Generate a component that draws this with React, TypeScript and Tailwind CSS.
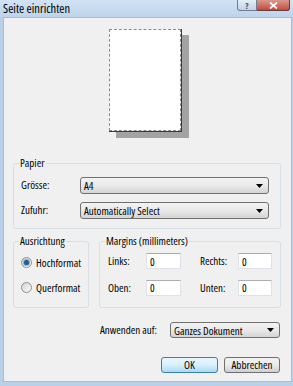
import React from "react";

const font = "font-['Open_Sans','Liberation_Sans',Arial,sans-serif] [font-stretch:condensed] [font-weight:380]";

function Arrow() {
  return (
    <svg width="7" height="4" viewBox="0 0 7 4" className="shrink-0">
      <path d="M0 0H7L3.5 4Z" fill="#000" />
    </svg>
  );
}

function Select({ value, className }: { value: string; className: string }) {
  return (
    <div
      className={`flex items-center justify-between pl-[3px] pr-[5px] rounded-[3px] border border-[#707070] bg-gradient-to-b from-[#f3f3f3] via-[#e9e9e9] to-[#d4d4d4] ${className}`}
    >
      <span className="leading-none">{value}</span>
      <Arrow />
    </div>
  );
}

function Group({ label, className, children }: { label: string; className: string; children: React.ReactNode }) {
  return (
    <div className={`relative border border-[#d5dfe5] rounded-[3px] ${className}`}>
      <span className="absolute -top-[7px] left-[5px] px-[1px] bg-[#f0f0f0] leading-[12px]">{label}</span>
      {children}
    </div>
  );
}

function Field({ value, className }: { value: string; className: string }) {
  return (
    <div
      className={`h-[16px] bg-white border border-[#dde2ea] border-t-[#abadb3] pl-[3px] flex items-center leading-none ${className}`}
    >
      {value}
    </div>
  );
}

function Radio({ checked, label }: { checked?: boolean; label: string }) {
  return (
    <div className="h-[13px] flex items-center gap-[4px] ml-[7px]">
      <div className="w-[11px] h-[11px] rounded-full border border-[#8e8f8f] bg-gradient-to-br from-[#d4d4d4] to-[#fafafa] flex items-center justify-center">
        {checked && (
          <div className="w-[5px] h-[5px] rounded-full bg-[#1f5d92] shadow-[0_0_0_1px_#7fb0d8]" />
        )}
      </div>
      <span className="leading-none">{label}</span>
    </div>
  );
}

function Button({ label, primary }: { label: string; primary?: boolean }) {
  return (
    <div
      className={`h-[16px] flex items-center justify-center rounded-[3px] border leading-none ${
        primary
          ? "w-[57px] border-[#3c7fb1] bg-gradient-to-b from-[#eaf6fd] via-[#d9f0fc] to-[#a7d9f5]"
          : "w-[56px] border-[#707070] bg-gradient-to-b from-[#f2f2f2] via-[#ebebeb] to-[#cfcfcf]"
      }`}
    >
      {label}
    </div>
  );
}

export default function App() {
  return (
    <div className={`w-[293px] h-[386px] bg-[#b9d0e9] flex flex-col text-[11px] text-black ${font}`}>
      {/* title bar */}
      <div className="h-[17px] shrink-0 flex items-start justify-between bg-gradient-to-b from-[#d2e3f5] to-[#bdd4ec]">
        <span className="pl-[3px] pt-[2px] text-[12.5px] leading-[13px] [font-stretch:80%]">Seite einrichten</span>
        <div className="flex mr-[3px]">
          <div className="w-[20px] h-[11px] rounded-bl-[3px] border border-t-0 border-[#6f7f93] bg-gradient-to-b from-[#e6eef7] to-[#c2d2e4] flex items-center justify-center text-[9px] font-bold text-[#3d4a5a] leading-none">
            ?
          </div>
          <div className="w-[33px] h-[11px] rounded-br-[3px] border border-t-0 border-l-0 border-[#6f3a36] bg-gradient-to-b from-[#d9978c] to-[#c4483c] flex items-center justify-center">
            <svg width="9" height="7" viewBox="0 0 9 7">
              <path d="M1 0.5L8 6.5M8 0.5L1 6.5" stroke="#fff" strokeWidth="1.8" />
            </svg>
          </div>
        </div>
      </div>

      {/* client area */}
      <div className="flex-1 ml-[3px] mr-[1px] mb-[4px] border border-[#a9bcd0] bg-[#f0f0f0] flex flex-col">
        {/* page preview */}
        <div className="ml-[105px] mt-[11px] w-[73px] h-[103px] bg-white border-r border-b border-[#3a3a3a] shadow-[7px_6px_0_0_#a3a3a3]">
          <div className="w-full h-full border border-dashed border-[#8a8a8a]" />
        </div>

        <Group label="Papier" className="ml-[9px] mt-[31px] w-[268px] pt-[13px] pb-[9px] pl-[7px] flex flex-col gap-[8px]">
          <div className="flex items-center">
            <span className="w-[59px]">Grösse:</span>
            <Select value="A4" className="w-[189px] h-[17px]" />
          </div>
          <div className="flex items-center">
            <span className="w-[59px]">Zufuhr:</span>
            <Select value="Automatically Select" className="w-[189px] h-[17px]" />
          </div>
        </Group>

        <div className="flex ml-[9px] mt-[12px] gap-[10px]">
          <Group label="Ausrichtung" className="w-[76px] h-[67px] pt-[14px] flex flex-col gap-[12px]">
            <Radio checked label="Hochformat" />
            <Radio label="Querformat" />
          </Group>
          <Group label="Margins (millimeters)" className="w-[182px] h-[67px] pt-[11px] pl-[8px] flex flex-col gap-[10px]">
            <div className="flex items-center">
              <span className="w-[38px]">Links:</span>
              <Field value="0" className="w-[35px]" />
              <span className="w-[38px] ml-[19px]">Rechts:</span>
              <Field value="0" className="w-[34px]" />
            </div>
            <div className="flex items-center">
              <span className="w-[38px]">Oben:</span>
              <Field value="0" className="w-[35px]" />
              <span className="w-[38px] ml-[19px]">Unten:</span>
              <Field value="0" className="w-[34px]" />
            </div>
          </Group>
        </div>

        <div className="flex items-center justify-end mt-[14px] mr-[11px] gap-[13px]">
          <span>Anwenden auf:</span>
          <Select value="Ganzes Dokument" className="w-[110px] h-[16px]" />
        </div>

        <div className="flex justify-end mt-[18px] mr-[11px] gap-[6px]">
          <Button label="OK" primary />
          <Button label="Abbrechen" />
        </div>
      </div>
    </div>
  );
}
